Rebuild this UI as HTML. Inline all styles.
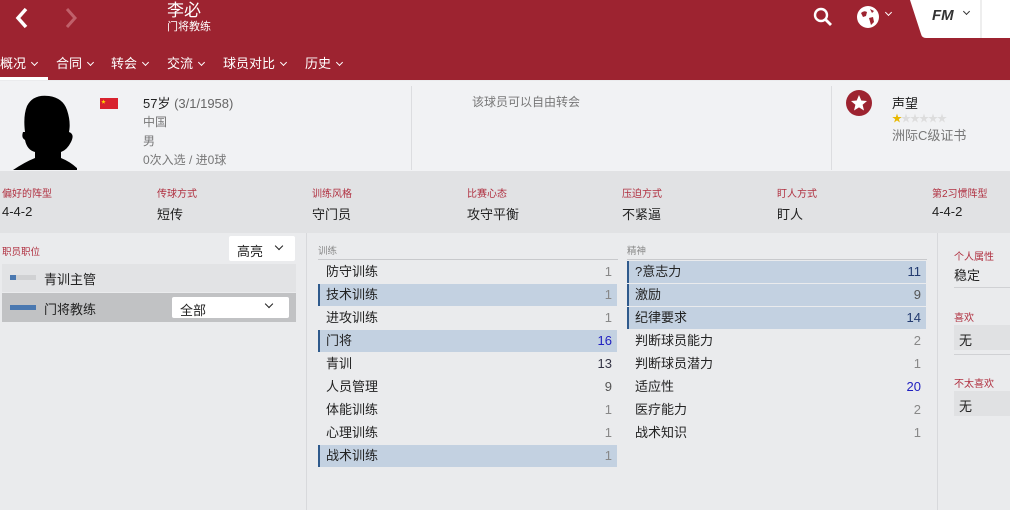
<!DOCTYPE html>
<html><head><meta charset="utf-8"><style>
*{margin:0;padding:0;box-sizing:border-box}
body{width:1010px;height:510px;overflow:hidden;background:#eaebed;font-family:"Liberation Sans","Noto Sans CJK SC",sans-serif;color:#222;position:relative;font-size:13px}
.a{position:absolute}
.hdr{left:0;top:0;width:1010px;height:80px;background:#9d2330}
.tab{color:#fff;font-size:13px;top:53px}
.chev{display:inline-block;width:5px;height:5px;border-right:1.3px solid #fff;border-bottom:1.3px solid #fff;transform:rotate(45deg);margin-left:6px;position:relative;top:-3px}
.lbl{color:#b03040;font-size:10px}
.val{font-size:13px}
.row{position:absolute;height:22px;line-height:22px;font-size:13px}
.row.h{background:#c3d1e1;box-shadow:inset 2px 0 0 #2f5a8c}
.row span.n{position:absolute;right:5px;color:#888}
.row span.b{color:#2020c0}
.row span.t{position:absolute;left:8px}
.dd{background:#fff;border-radius:2px;position:absolute}
.dchev{position:absolute;width:6px;height:6px;border-right:1.6px solid #222;border-bottom:1.6px solid #222;transform:rotate(45deg)}
</style></head><body>
<div class="a hdr"></div>
<svg class="a" style="left:12px;top:6px" width="20" height="24"><path d="M14 3 L6 12 L14 21" stroke="#fff" stroke-width="3.5" fill="none"/></svg>
<svg class="a" style="left:62px;top:6px" width="20" height="24"><path d="M5 3 L13 12 L5 21" stroke="#c0606a" stroke-width="3" fill="none"/></svg>
<div class="a" style="left:167px;top:2px;color:#fff;font-size:17px;line-height:18px">李必</div>
<div class="a" style="left:167px;top:21px;color:#fff;font-size:11px;line-height:12px">门将教练</div>
<svg class="a" style="left:812px;top:6px" width="22" height="22"><circle cx="9" cy="9" r="6" stroke="#fff" stroke-width="2.4" fill="none"/><path d="M13 13 L19 19" stroke="#fff" stroke-width="2.8"/></svg>
<svg class="a" style="left:856px;top:5px" width="24" height="24"><circle cx="12" cy="12" r="11" fill="#fff"/><path d="M5 8 Q8 5 11 7 L10 11 L7 12 Z M13 13 L17 12 L18 17 L15 20 Z M14 4 L18 6 L16 8 Z" fill="#9d2330"/></svg>
<div class="a" style="left:880px;top:6px"><span class="chev"></span></div>
<svg class="a" style="left:910px;top:0" width="100" height="40"><path d="M0 0 H100 V38 H16 Q12 38 11 34 Z" fill="#fff"/><path d="M71 0 V38" stroke="#ddd"/></svg>
<div class="a" style="left:932px;top:7px;font-weight:bold;font-style:italic;font-size:15px;color:#333">FM</div>
<div class="a" style="left:958px;top:5px"><span class="chev" style="border-color:#333"></span></div>
<div class="a tab" style="left:0">概况<span class="chev"></span></div>
<div class="a tab" style="left:56px">合同<span class="chev"></span></div>
<div class="a tab" style="left:111px">转会<span class="chev"></span></div>
<div class="a tab" style="left:167px">交流<span class="chev"></span></div>
<div class="a tab" style="left:223px">球员对比<span class="chev"></span></div>
<div class="a tab" style="left:305px">历史<span class="chev"></span></div>
<div class="a" style="left:0;top:77px;width:48px;height:3px;background:#fff"></div>
<div class="a" style="left:0;top:81px;width:1010px;height:90px;background:#f1f2f4"></div>
<div class="a" style="left:411px;top:86px;width:1px;height:84px;background:#dcdde0"></div>
<div class="a" style="left:831px;top:86px;width:1px;height:84px;background:#dcdde0"></div>
<svg class="a" style="left:5px;top:92px" width="72" height="78"><path d="M8 78 Q20 70 30 66 L30 60 Q22 58 20 48 Q16 46 18 40 L20 40 Q18 24 22 14 Q28 2 44 4 Q58 6 62 18 Q66 30 64 40 Q70 42 66 50 Q62 58 56 60 L56 66 Q66 70 74 78 Z" fill="#000"/></svg>
<svg class="a" style="left:100px;top:98px" width="18" height="11"><rect width="18" height="11" fill="#d8222e"/><path d="M3.5 1.5 l0.6 1.6 1.7 0 -1.4 1 0.5 1.6 -1.4 -1 -1.4 1 0.5 -1.6 -1.4 -1 1.7 0z" fill="#ffd700"/></svg>
<div class="a" style="left:143px;top:93px;font-size:13px">57岁 <span style="color:#666">(3/1/1958)</span></div>
<div class="a" style="left:143px;top:113px;color:#777;font-size:12px">中国</div>
<div class="a" style="left:143px;top:132px;color:#777;font-size:12px">男</div>
<div class="a" style="left:143px;top:151px;color:#777;font-size:12px">0次入选 / 进0球</div>
<div class="a" style="left:472px;top:93px;color:#777;font-size:12px">该球员可以自由转会</div>
<svg class="a" style="left:846px;top:90px" width="26" height="26"><circle cx="13" cy="13" r="13" fill="#9d2330"/><path d="M13 5 L15.3 10.5 L21 11 L16.6 14.7 L18 20.5 L13 17.4 L8 20.5 L9.4 14.7 L5 11 L10.7 10.5 Z" fill="#fff"/></svg>
<div class="a" style="left:892px;top:93px;font-size:13px">声望</div>
<div class="a" style="left:892px;top:110px;font-size:10px;color:#ddd;letter-spacing:-1px"><span style="color:#e8b800">★</span>★★★★★</div>
<div class="a" style="left:892px;top:125px;color:#777;font-size:13px">洲际C级证书</div>
<div class="a" style="left:0;top:171px;width:1010px;height:62px;background:#e1e2e4"></div>
<div class="a lbl" style="left:2px;top:185px">偏好的阵型</div><div class="a val" style="left:2px;top:204px">4-4-2</div>
<div class="a lbl" style="left:157px;top:185px">传球方式</div><div class="a val" style="left:157px;top:204px">短传</div>
<div class="a lbl" style="left:312px;top:185px">训练风格</div><div class="a val" style="left:312px;top:204px">守门员</div>
<div class="a lbl" style="left:467px;top:185px">比赛心态</div><div class="a val" style="left:467px;top:204px">攻守平衡</div>
<div class="a lbl" style="left:622px;top:185px">压迫方式</div><div class="a val" style="left:622px;top:204px">不紧逼</div>
<div class="a lbl" style="left:777px;top:185px">盯人方式</div><div class="a val" style="left:777px;top:204px">盯人</div>
<div class="a lbl" style="left:932px;top:185px">第2习惯阵型</div><div class="a val" style="left:932px;top:204px">4-4-2</div>
<div class="a" style="left:306px;top:233px;width:1px;height:277px;background:#d8d9dc"></div>
<div class="a" style="left:937px;top:233px;width:1px;height:277px;background:#d8d9dc"></div>
<div class="a lbl" style="left:2px;top:244px;font-size:9.5px">职员职位</div>
<div class="dd" style="left:229px;top:236px;width:66px;height:25px"></div>
<div class="a" style="left:237px;top:241px">高亮</div><div class="dchev" style="left:276px;top:243px"></div>
<div class="a" style="left:2px;top:264px;width:294px;height:28px;background:#e2e3e5"></div>
<div class="a" style="left:10px;top:275px;width:26px;height:5px;background:#d0d1d3"></div><div class="a" style="left:10px;top:275px;width:6px;height:5px;background:#4a78b0"></div>
<div class="a" style="left:44px;top:269px">青训主管</div>
<div class="a" style="left:2px;top:293px;width:294px;height:29px;background:#c1c2c4"></div>
<div class="a" style="left:10px;top:305px;width:26px;height:5px;background:#4a78b0"></div>
<div class="a" style="left:44px;top:299px">门将教练</div>
<div class="dd" style="left:172px;top:297px;width:117px;height:21px"></div>
<div class="a" style="left:180px;top:300px">全部</div><div class="dchev" style="left:266px;top:301px"></div>
<div class="a" style="left:318px;top:243px;font-size:9.5px;color:#888">训练</div>
<div class="a" style="left:318px;top:259px;width:300px;height:1px;background:#c8c9cc"></div>
<div class="a" style="left:627px;top:243px;font-size:9.5px;color:#888">精神</div>
<div class="a" style="left:627px;top:259px;width:300px;height:1px;background:#c8c9cc"></div>
<div class="row" style="left:318px;top:261px;width:299px"><span class="t">防守训练</span><span class="n">1</span></div>
<div class="row h" style="left:318px;top:284px;width:299px"><span class="t">技术训练</span><span class="n">1</span></div>
<div class="row" style="left:318px;top:307px;width:299px"><span class="t">进攻训练</span><span class="n">1</span></div>
<div class="row h" style="left:318px;top:330px;width:299px"><span class="t">门将</span><span class="n b">16</span></div>
<div class="row" style="left:318px;top:353px;width:299px"><span class="t">青训</span><span class="n" style="color:#334">13</span></div>
<div class="row" style="left:318px;top:376px;width:299px"><span class="t">人员管理</span><span class="n" style="color:#555">9</span></div>
<div class="row" style="left:318px;top:399px;width:299px"><span class="t">体能训练</span><span class="n">1</span></div>
<div class="row" style="left:318px;top:422px;width:299px"><span class="t">心理训练</span><span class="n">1</span></div>
<div class="row h" style="left:318px;top:445px;width:299px"><span class="t">战术训练</span><span class="n">1</span></div>
<div class="row h" style="left:627px;top:261px;width:299px"><span class="t">?意志力</span><span class="n" style="color:#223a70">11</span></div>
<div class="row h" style="left:627px;top:284px;width:299px"><span class="t">激励</span><span class="n" style="color:#555">9</span></div>
<div class="row h" style="left:627px;top:307px;width:299px"><span class="t">纪律要求</span><span class="n" style="color:#223a70">14</span></div>
<div class="row" style="left:627px;top:330px;width:299px"><span class="t">判断球员能力</span><span class="n">2</span></div>
<div class="row" style="left:627px;top:353px;width:299px"><span class="t">判断球员潜力</span><span class="n">1</span></div>
<div class="row" style="left:627px;top:376px;width:299px"><span class="t">适应性</span><span class="n b">20</span></div>
<div class="row" style="left:627px;top:399px;width:299px"><span class="t">医疗能力</span><span class="n">2</span></div>
<div class="row" style="left:627px;top:422px;width:299px"><span class="t">战术知识</span><span class="n">1</span></div>
<div class="a lbl" style="left:954px;top:248px">个人属性</div>
<div class="a" style="left:954px;top:265px">稳定</div>
<div class="a" style="left:954px;top:287px;width:56px;height:1px;background:#d0d1d4"></div>
<div class="a lbl" style="left:954px;top:309px">喜欢</div>
<div class="a" style="left:954px;top:325px;width:56px;height:25px;background:#e0e1e3"></div>
<div class="a" style="left:959px;top:330px">无</div>
<div class="a" style="left:954px;top:354px;width:56px;height:1px;background:#d0d1d4"></div>
<div class="a lbl" style="left:954px;top:375px">不太喜欢</div>
<div class="a" style="left:954px;top:391px;width:56px;height:25px;background:#e0e1e3"></div>
<div class="a" style="left:959px;top:396px">无</div>
</body></html>
